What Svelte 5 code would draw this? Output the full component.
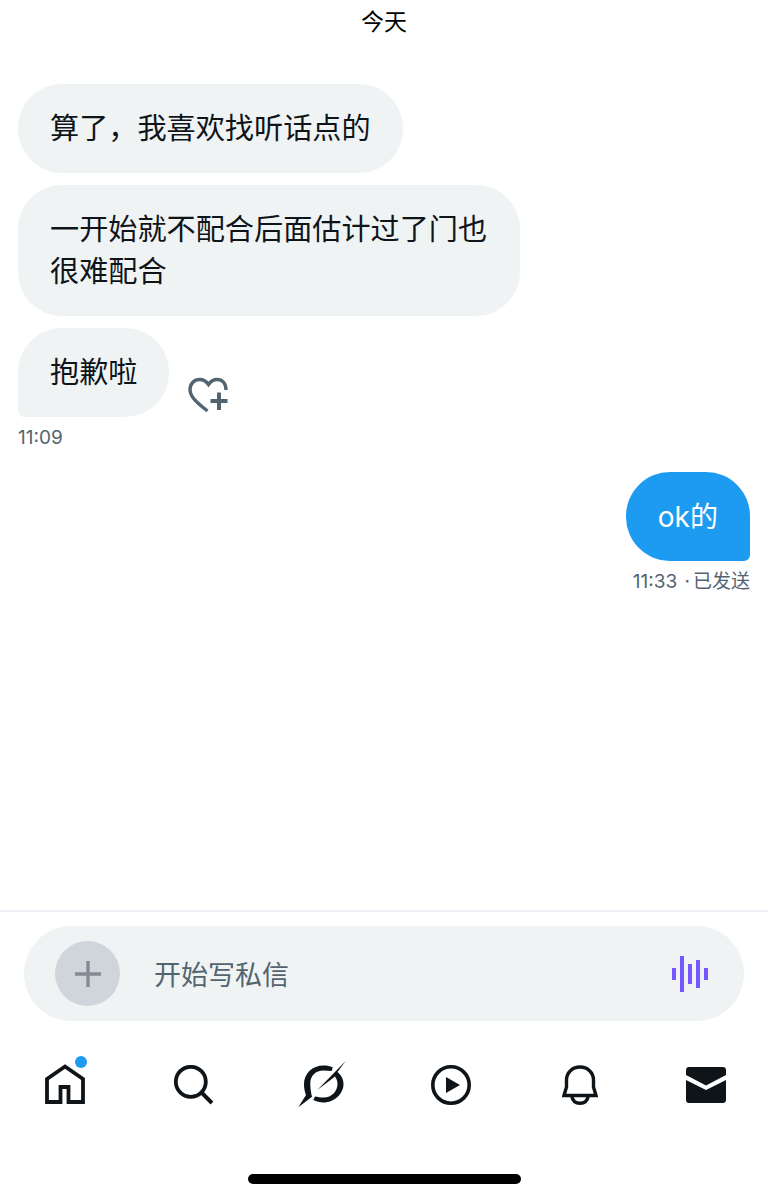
<script lang="ts">
	const incoming = ['算了，我喜欢找听话点的', '一开始就不配合后面估计过了门也很难配合'];
</script>

<div class="page">
	<div class="day">今天</div>

	<main class="thread">
		{#each incoming as text}
			<div class="bubble in">{text}</div>
		{/each}
		<div class="last-row">
			<div class="bubble in tail-left">抱歉啦</div>
			<svg class="react" width="40" height="36" viewBox="0 0 40 36" fill="none" stroke="#536471" stroke-width="3.400">
				<path d="M19.500 34 C12 28 2 21 2 12.500 C2 6.500 6.500 2.500 11.500 2.500 C15 2.500 18.500 4.500 20.500 7.500 C22.500 4.500 25.500 2.500 29 2.500 C34.500 2.500 38 6.500 38 13" />
				<path d="M31 15.500 V33 M22.500 24 H39.500" stroke-width="4" />
			</svg>
		</div>
		<div class="meta">11:09</div>

		<div class="bubble out tail-right">ok的</div>
		<div class="meta right">11:33 <span class="dot">·</span>已发送</div>
	</main>

	<div class="composer-wrap">
		<div class="composer">
			<div class="add">
				<svg width="28" height="28" viewBox="0 0 28 28" stroke="#868b94" stroke-width="3.400">
					<path d="M14 1 V27 M1 14 H27" />
				</svg>
			</div>
			<div class="placeholder">开始写私信</div>
			<svg class="wave" width="36" height="36" viewBox="0 0 36 36" fill="#7856ff">
				<rect x="0" y="12" width="4" height="12" />
				<rect x="8" y="0" width="4" height="36" />
				<rect x="16" y="8" width="4" height="20" />
				<rect x="24" y="4" width="4" height="28" />
				<rect x="32" y="12" width="4" height="12" />
			</svg>
		</div>
	</div>

	<nav class="tabs">
		<div class="tab">
			<svg width="40" height="42" viewBox="0 0 40 42" fill="none" stroke="#0f1419" stroke-width="3.800">
				<path d="M2 38 V15 L20 2.500 L38 15 V38 H23.500 V23 H15.500 V38 Z" />
			</svg>
			<span class="badge"></span>
		</div>
		<div class="tab">
			<svg width="40" height="40" viewBox="0 0 40 40" fill="none" stroke="#0f1419">
				<circle cx="17.800" cy="16.800" r="15" stroke-width="3.800" />
				<path d="M28 27 L39 38" stroke-width="4" />
			</svg>
		</div>
		<div class="tab">
			<svg width="50" height="50" viewBox="0 0 50 50" fill="#0f1419">
				<path d="M49.700 1 L41.500 12 C46 16 47.500 20 47.500 24 C47.500 34 38 42.500 27.500 42.500 C24 42.500 20 41.500 17.300 40 L19 36.500 C21.500 37 24.500 37.500 27.500 37.500 C36 37.500 41.500 31 41.500 24 C41.500 21 40.500 18.500 39 16.500 L21.300 30 Z" />
				<path d="M2.300 47.300 L10 35 C8.500 31.500 8 27.500 8 24 C8 13.500 16.500 5.500 27.500 5.500 C31 5.500 34 6 36.700 7.300 L35.700 11 C33 10.800 30 10.600 27.500 10.600 C19.500 10.600 14.300 16 14.300 23.500 C14.300 28 15 33 16 36.700 Z" />
			</svg>
		</div>
		<div class="tab">
			<svg width="40" height="40" viewBox="0 0 40 40" fill="none">
				<circle cx="20" cy="20" r="18.200" stroke="#0f1419" stroke-width="3.600" />
				<path d="M15 12 L29 20 L15 28 Z" fill="#0f1419" />
			</svg>
		</div>
		<div class="tab">
			<svg width="36" height="40" viewBox="0 0 36 40" fill="none" stroke="#0f1419" stroke-width="3.400">
				<path d="M2 30.500 L4.500 22 V15 C4.500 7.500 10.500 2 18 2 C25.500 2 31.500 7.500 31.500 15 V22 L34 30.500 Z" />
				<path d="M9.700 31 C10.500 35.500 13.500 38.300 18 38.300 C22.500 38.300 25.500 35.500 26.300 31" />
			</svg>
		</div>
		<div class="tab">
			<svg width="40" height="36" viewBox="0 0 40 36" fill="#0f1419">
				<path d="M3 0 H37 C38.700 0 40 1.300 40 3 V8 L20 18.500 L0 8 V3 C0 1.300 1.300 0 3 0 Z" />
				<path d="M0 13 L20 23 L40 13 V33 C40 34.700 38.700 36 37 36 H3 C1.300 36 0 34.700 0 33 Z" />
			</svg>
		</div>
	</nav>

	<div class="home-bar"></div>
</div>

<style>
	:global(body) {
		margin: 0;
		background: #fff;
	}

	.page {
		width: 768px;
		height: 1200px;
		display: flex;
		flex-direction: column;
		overflow: hidden;
		background: #fff;
		color: #0f1419;
		font-family: Inter, "Noto Sans CJK SC", sans-serif;
	}

	.day {
		height: 44px;
		line-height: 44px;
		text-align: center;
		font-size: 23px;
		color: #000;
	}

	.thread {
		flex: 1;
		display: flex;
		flex-direction: column;
		align-items: flex-start;
		gap: 12px;
		padding: 40px 18px 0;
	}

	.bubble {
		box-sizing: border-box;
		padding: 23.500px 32px;
		font-size: 29.150px;
		line-height: 42px;
		border-radius: 44px;
	}

	.in {
		background: #eff3f4;
		max-width: 502px;
	}

	.out {
		align-self: flex-end;
		background: #1d9bf0;
		color: #fff;
		font-size: 28px;
		margin-top: 9px;
	}

	.tail-left {
		border-bottom-left-radius: 6px;
	}

	.tail-right {
		border-bottom-right-radius: 6px;
	}

	.last-row {
		display: flex;
		align-items: flex-end;
		gap: 18.500px;
	}

	.react {
		margin-bottom: 4px;
	}

	.meta {
		margin-top: -4px;
		font-size: 19px;
		line-height: 26px;
		color: #536471;
	}

	.meta.right {
		align-self: flex-end;
	}

	.dot {
		margin: 0 3px 0 2px;
	}

	.composer-wrap {
		border-top: 2px solid #eff0f5;
		padding: 14px 24px 0;
	}

	.composer {
		height: 95px;
		box-sizing: border-box;
		display: flex;
		align-items: center;
		padding: 0 36px 0 31px;
		background: #eff3f4;
		border-radius: 48px;
	}

	.add {
		width: 65px;
		height: 65px;
		border-radius: 50%;
		background: #cfd5db;
		display: flex;
		align-items: center;
		justify-content: center;
		flex-shrink: 0;
	}

	.placeholder {
		flex: 1;
		margin-left: 34px;
		font-size: 27px;
		color: #536471;
	}

	.tabs {
		height: 153px;
		box-sizing: border-box;
		display: grid;
		grid-template-columns: 128px 128px 128px 132px 126px 126px;
		grid-template-rows: 64px;
		align-items: center;
		justify-items: center;
		padding: 32px 0 0 1px;
	}

	.tab {
		position: relative;
		display: flex;
	}

	.badge {
		position: absolute;
		top: -8px;
		right: -2px;
		width: 12px;
		height: 12px;
		border-radius: 50%;
		background: #1d9bf0;
	}

	.home-bar {
		align-self: center;
		width: 273px;
		height: 10px;
		margin-bottom: 16px;
		border-radius: 5px;
		background: #000;
	}
</style>
